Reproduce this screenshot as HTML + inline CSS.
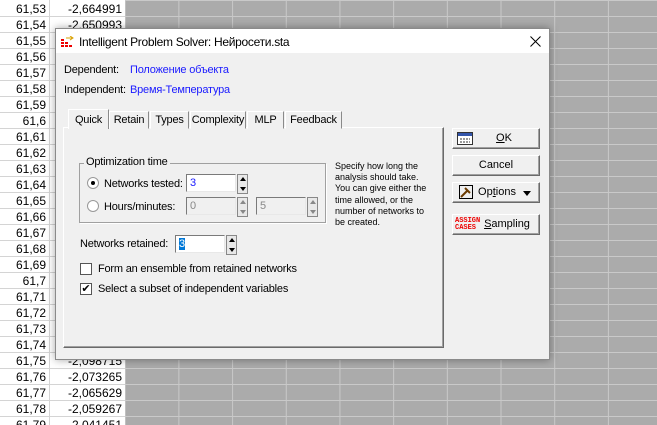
<!DOCTYPE html>
<html><head><meta charset="utf-8"><style>
*{margin:0;padding:0;box-sizing:border-box}
html,body{width:657px;height:425px;overflow:hidden}
body{position:relative;font-family:"Liberation Sans",sans-serif;font-size:11px;background:#ababab}
.a{position:absolute}
.grid{position:absolute;left:125px;top:0;width:532px;height:425px;background-color:#ababab;
background-image:linear-gradient(to right,#c9c9c9 1px,transparent 1px),linear-gradient(to bottom,#c9c9c9 1px,transparent 1px);
background-size:53.7px 16px;background-position:-0.3px 0px}
.colA{position:absolute;left:0;top:0;width:50px;height:425px;background:#fff;border-right:1px solid #d4d4d4}
.colB{position:absolute;left:50px;top:0;width:75px;height:425px;background:#fff}
.row{position:absolute;height:16px;border-bottom:1px solid #d4d4d4;font-size:12px;text-align:right;line-height:16px;color:#000}
.dlg{position:absolute;left:55px;top:28px;width:495px;height:332px;background:#f0f0f0;border:1px solid #8a8a8a;box-shadow:0 0 8px rgba(0,0,0,.35)}
.title{position:absolute;left:0;top:0;width:493px;height:24px;background:#fff}
.btn{position:absolute;left:396px;width:88px;height:21px;background:#f0f0f0;border:1px solid;border-color:#fff #6a6a6a #6a6a6a #fff;box-shadow:inset -1px -1px 0 #a0a0a0;font-size:11px;text-align:center;line-height:19px}
.tab{position:absolute;top:82px;height:18px;border:1px solid;border-color:#fff #8a8a8a transparent #fff;font-size:11px;letter-spacing:-0.2px;line-height:16px;text-align:center;background:#f0f0f0;white-space:nowrap;overflow:hidden}
.edit{position:absolute;height:18px;background:#fff;border:1px solid;border-color:#7a7a7a #e8e8e8 #e8e8e8 #7a7a7a;font-size:11px;line-height:16px;padding-left:3px}
.spin{position:absolute;width:11px;height:20px;background:#e8e8e8;border:1px solid #888}
.spin:before{content:"";position:absolute;left:2px;top:2px;border:3px solid transparent;border-bottom:4px solid #000;border-top:0}
.spin:after{content:"";position:absolute;left:2px;bottom:2px;border:3px solid transparent;border-top:4px solid #000;border-bottom:0}
.spin.d:before,.spin.d:after{border-bottom-color:#888;border-top-color:#888}
.lbl{position:absolute;font-size:11px;letter-spacing:-0.2px;white-space:nowrap}
</style></head><body>
<div class="colA"></div><div class="colB"></div>
<div class="grid"></div>
<div id="rows"></div>
<script>
var v=["-2,664991","-2,650993","","","","","","","","","","","","","","","","","","","","","-2,098715","-2,073265","-2,065629","-2,059267","-2,041451"];
var h="";for(var i=0;i<27;i++){var n=53+i;var s="61,"+n;if(n%10==0)s="61,"+(n/10);
h+='<div class="row" style="left:0;top:'+(i*16+1)+'px;width:50px;padding-right:4px">'+s+'</div>';
h+='<div class="row" style="left:50px;top:'+(i*16+1)+'px;width:75px;padding-right:3px">'+v[i]+'</div>';}
document.getElementById("rows").innerHTML=h;
</script>
<div class="dlg">
<div class="title">
<svg class="a" style="left:5px;top:7px" width="14" height="12"><g fill="#e00"><rect x="0" y="3" width="3" height="2"/><rect x="0" y="6" width="3" height="2"/><rect x="0" y="9" width="3" height="2"/><rect x="4" y="6" width="3" height="2"/><rect x="4" y="9" width="3" height="2"/><rect x="8" y="9" width="3" height="2"/></g><path d="M5 2h6M9 0l3 2-3 2" stroke="#d8a000" fill="none"/></svg>
<div class="lbl" style="left:23px;top:6px;font-size:12px;letter-spacing:-0.3px">Intelligent Problem Solver: Нейросети.sta</div>
<svg class="a" style="left:474px;top:7px" width="11" height="11"><path d="M0.5 0.5l10 10M10.5 0.5l-10 10" stroke="#000" stroke-width="1"/></svg>
</div>
<div class="lbl" style="left:8px;top:35px">Dependent:</div>
<div class="lbl" style="left:74px;top:35px;color:#1a1aff">Положение объекта</div>
<div class="lbl" style="left:8px;top:55px">Independent:</div>
<div class="lbl" style="left:74px;top:55px;color:#1a1aff">Время-Температура</div>
<div class="a" style="left:7px;top:98px;width:381px;height:221px;border:1px solid;border-color:#fff #6a6a6a #6a6a6a #fff;box-shadow:inset -1px -1px 0 #a0a0a0"></div>
<div class="tab" style="left:12px;top:80px;height:20px;width:41px;line-height:20px;border-bottom:none">Quick</div>
<div class="tab" style="left:53px;width:40px">Retain</div>
<div class="tab" style="left:94px;width:39px">Types</div>
<div class="tab" style="left:134px;width:56px">Complexity</div>
<div class="tab" style="left:191px;width:37px">MLP</div>
<div class="tab" style="left:229px;width:57px">Feedback</div>
<div class="a" style="left:23px;top:134px;width:247px;height:60px;border:1px solid #a0a0a0;box-shadow:1px 1px 0 #fff"></div>
<div class="lbl" style="left:28px;top:127px;background:#f0f0f0;padding:0 2px">Optimization time</div>
<div class="a" style="left:31px;top:148px;width:12px;height:12px;border-radius:50%;background:#fff;border:1px solid #999"><div class="a" style="left:3px;top:3px;width:4px;height:4px;border-radius:50%;background:#000"></div></div>
<div class="lbl" style="left:48px;top:149px">Networks tested:</div>
<div class="edit" style="left:130px;top:145px;width:50px;color:#1a1aff">3</div>
<div class="spin" style="left:181px;top:145px"></div>
<div class="a" style="left:31px;top:171px;width:12px;height:12px;border-radius:50%;background:#fff;border:1px solid #999"></div>
<div class="lbl" style="left:48px;top:172px">Hours/minutes:</div>
<div class="edit" style="left:130px;top:168px;width:50px;background:#f0f0f0;color:#888">0</div>
<div class="spin d" style="left:181px;top:168px"></div>
<div class="edit" style="left:200px;top:168px;width:50px;background:#f0f0f0;color:#888">5</div>
<div class="spin d" style="left:251px;top:168px"></div>
<div class="a" style="left:279px;top:132px;width:100px;font-size:9px;line-height:11.2px;color:#000">Specify how long the analysis should take. You can give either the time allowed, or the number of networks to be created.</div>
<div class="lbl" style="left:24px;top:209px">Networks retained:</div>
<div class="edit" style="left:119px;top:206px;width:50px"><span style="background:#0078d7;color:#fff">3</span></div>
<div class="spin" style="left:170px;top:206px"></div>
<div class="a" style="left:24px;top:234px;width:12px;height:12px;background:#fff;border:1px solid #555"></div>
<div class="lbl" style="left:42px;top:234px">Form an ensemble from retained networks</div>
<div class="a" style="left:24px;top:254px;width:12px;height:12px;background:#fff;border:1px solid #555;font-size:11px;line-height:10px;text-align:center">✔</div>
<div class="lbl" style="left:42px;top:254px">Select a subset of independent variables</div>
<div class="btn" style="top:99px"><svg class="a" style="left:4px;top:3px" width="16" height="13"><rect x=".5" y=".5" width="15" height="12" fill="#fff" stroke="#333"/><rect x="1" y="1" width="14" height="3" fill="#3355aa"/><path d="M3 7h10M3 10h10" stroke="#333" stroke-dasharray="2 1"/></svg><span style="margin-left:16px"><u>O</u>K</span></div>
<div class="btn" style="top:126px">Cancel</div>
<div class="btn" style="top:153px"><svg class="a" style="left:6px;top:2px" width="15" height="15"><rect x=".5" y=".5" width="13" height="13" fill="#eee" stroke="#000"/><path d="M2 12l7-7M6 3l5 5" stroke="#6a3a00" stroke-width="2"/></svg><span style="margin-left:2px">Op<u>t</u>ions</span><span class="a" style="right:8px;top:8px;border:4px solid transparent;border-top:5px solid #000"></span></div>
<div class="btn" style="top:185px"><div class="a" style="left:2px;top:3px;font-size:7px;line-height:7px;color:#e00;font-family:'Liberation Mono',monospace;font-weight:bold;text-align:left">ASSIGN<br>CASES</div><span style="margin-left:22px"><u>S</u>ampling</span></div>
</div>
</body></html>
